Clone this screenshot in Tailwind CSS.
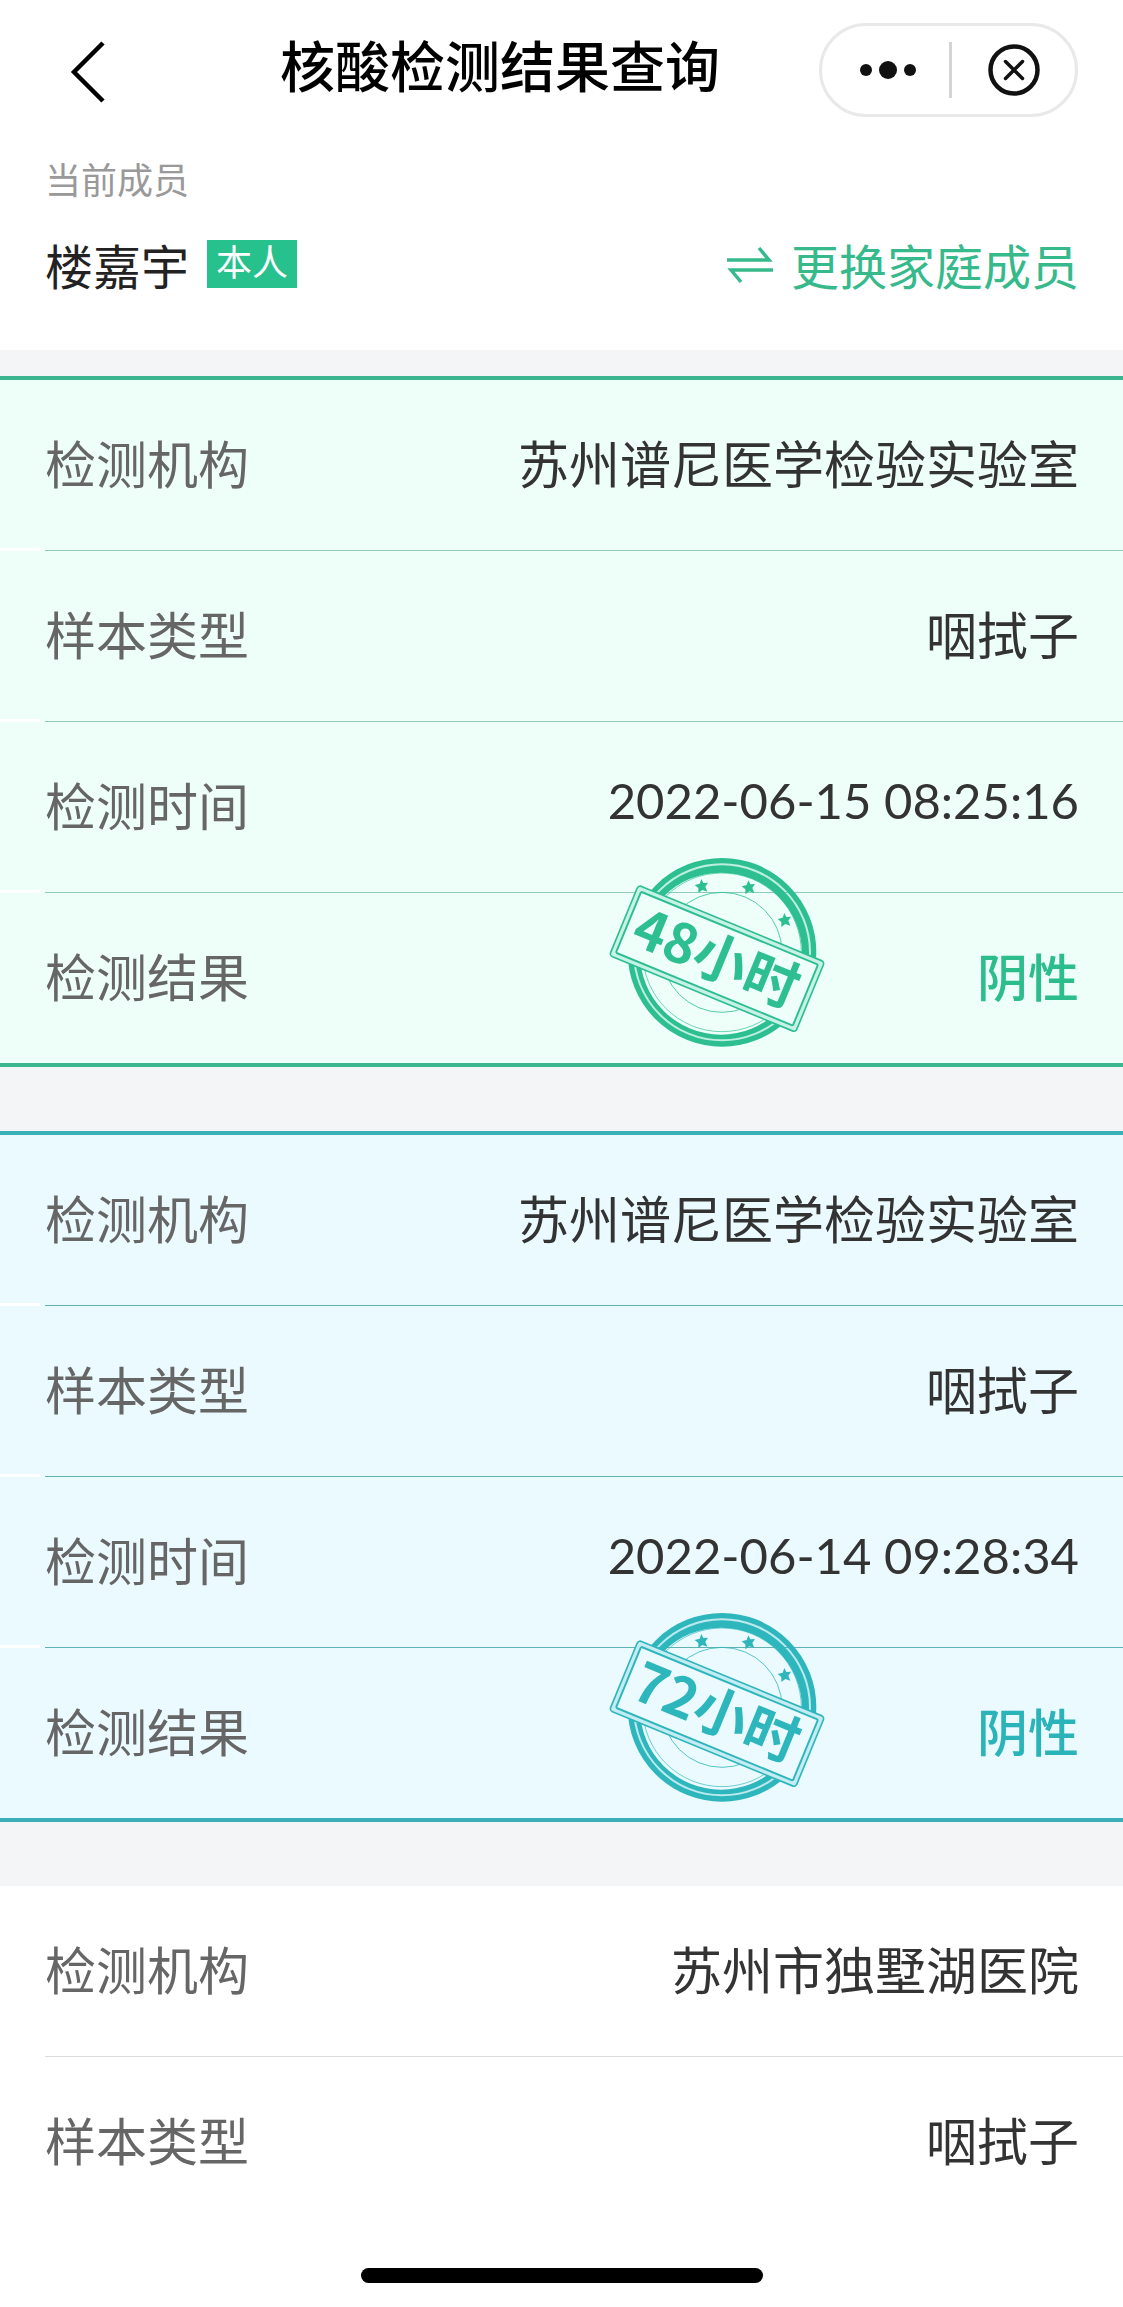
<!DOCTYPE html>
<html lang="zh-CN">
<head>
<meta charset="utf-8">
<meta name="viewport" content="width=device-width, initial-scale=1">
<title>核酸检测结果查询</title>
<script src="https://cdn.jsdelivr.net/npm/@tailwindcss/browser@4"></script>
</head>
<body class="bg-white font-['Noto_Sans_CJK_SC',sans-serif] text-[#333]">

<svg class="hidden" aria-hidden="true">
  <symbol id="stamp" viewBox="0 0 750 690">
    <g fill="none" stroke="currentColor">
      <circle cx="396" cy="337" r="275" stroke-width="16"/>
      <circle cx="396" cy="337" r="264" stroke-width="8" stroke-opacity="0.25"/>
      <circle cx="396" cy="337" r="238" stroke-width="2"/>
      <circle cx="396" cy="337" r="180" stroke-width="3" stroke-opacity="0.8"/>
    </g>
    <path fill="currentColor" fill-rule="evenodd" d="M396 76a261 261 0 1 0 0 522a261 261 0 1 0 0-522zM393 98a242 242 0 1 1 0 486a242 242 0 1 1 0-486z"/>
    <g fill="currentColor">
      <path id="star" d="M334 117l6 12 14-1-8 12 6 15-15-5-12 9 0-15-11-9 15-4z"/>
      <use href="#star" x="141" y="4"/>
      <use href="#star" x="249" y="102"/>
    </g>
    <g transform="rotate(22.4 381 356)">
      <rect x="79" y="242" width="604" height="228" rx="10" class="fill-(--card)" stroke="currentColor" stroke-width="5"/>
      <rect x="86" y="249" width="590" height="214" rx="6" fill="none" stroke="currentColor" stroke-opacity="0.2" stroke-width="10"/>
      <rect x="94" y="257" width="574" height="198" rx="4" fill="none" stroke="currentColor" stroke-width="6"/>
    </g>
  </symbol>
</svg>

<header class="flex items-start justify-between pt-[23px] pr-[45px] pl-[68px]">
  <button type="button" aria-label="返回" class="w-[212px] pt-[18px]">
    <svg class="h-[62px] w-[40px]" viewBox="0 0 40 62" fill="none" stroke="#000" stroke-width="4.500"><path d="M35 2L6 31l29 29"/></svg>
  </button>
  <h1 class="flex-1 text-[55px] leading-[80px] font-medium text-black">核酸检测结果查询</h1>
  <div class="flex h-[94px] w-[259px] items-center rounded-full border-3 border-[#e9e9e9] pl-1">
    <button type="button" aria-label="更多" class="flex flex-1 items-center justify-center gap-[7px]">
      <span class="size-3 rounded-full bg-[#111]"></span>
      <span class="size-[18px] rounded-full bg-[#111]"></span>
      <span class="size-3 rounded-full bg-[#111]"></span>
    </button>
    <span class="h-14 w-[3px] bg-[#d4d4d4]"></span>
    <button type="button" aria-label="关闭" class="flex flex-1 items-center justify-center">
      <svg class="size-[52px]" viewBox="0 0 52 52" fill="none" stroke="#111" stroke-linecap="round"><circle cx="26" cy="26" r="23.5" stroke-width="4.500"/><path d="M17.500 17.500l17 17m0-17l-17 17" stroke-width="3.500"/></svg>
    </button>
  </div>
</header>

<main>
  <section class="pt-[35px] pr-[44px] pb-[52px] pl-[45px]">
    <p class="text-[36px] leading-[52px] text-[#999]">当前成员</p>
    <div class="mt-[26px] flex items-center justify-between">
      <div class="flex items-center gap-[18px] text-[48px] leading-[68px] text-[#222]">
        <span>楼嘉宇</span>
        <span class="h-12 bg-[#27c18d] px-[9px] text-[36px] leading-[40px] text-white">本人</span>
      </div>
      <button type="button" class="flex items-center gap-[18px] text-[48px] leading-[68px] text-[#36ba8b]">
        <svg class="h-[40px] w-[46px]" viewBox="0 0 46 40" fill="none" stroke="currentColor" stroke-width="3.500"><path d="M0 16h42L32 4M46 26H4l10 12"/></svg>
        更换家庭成员
      </button>
    </div>
  </section>

  <div class="flex flex-col gap-16 bg-[#f4f5f7] pt-[26px]">

    <dl class="border-y-4 border-[#3cb68e] bg-[#eefffa] text-[51px] leading-[74px] [--card:#eefffa]">
      <div class="relative pl-[45px] after:absolute after:bottom-0 after:left-0 after:h-[3px] after:w-10 after:bg-white">
        <div class="flex justify-between border-b border-[#8fcdb9] pt-[45px] pr-[44px] pb-[51px]"><dt class="text-[#666]">检测机构</dt><dd>苏州谱尼医学检验实验室</dd></div>
      </div>
      <div class="relative pl-[45px] after:absolute after:bottom-0 after:left-0 after:h-[3px] after:w-10 after:bg-white">
        <div class="flex justify-between border-b border-[#8fcdb9] pt-[45px] pr-[44px] pb-[51px]"><dt class="text-[#666]">样本类型</dt><dd>咽拭子</dd></div>
      </div>
      <div class="relative pl-[45px] after:absolute after:bottom-0 after:left-0 after:h-[3px] after:w-10 after:bg-white">
        <div class="flex justify-between border-b border-[#8fcdb9] pt-[45px] pr-[44px] pb-[51px]"><dt class="text-[#666]">检测时间</dt><dd class="font-[Lato,sans-serif] text-[49px] leading-[66px]">2022-06-15 08:25:16</dd></div>
      </div>
      <div class="relative flex justify-between pt-[45px] pr-[44px] pb-[51px] pl-[45px]">
        <dt class="text-[#666]">检测结果</dt><dd class="font-medium text-[#2dbd8c]">阴性</dd>
        <dd class="absolute -top-[53px] right-[283px] text-[#2dbf8f]">
          <svg class="h-[230px] w-[250px]" viewBox="0 0 750 690" role="img" aria-label="48小时"><use href="#stamp"/><text x="379" y="414" text-anchor="middle" transform="rotate(22.4 381 356)" fill="currentColor" class="text-[164px] font-bold">48小时</text></svg>
        </dd>
      </div>
    </dl>

    <dl class="border-y-4 border-[#3bb0b8] bg-[#ebfaff] text-[51px] leading-[74px] [--card:#ebfaff]">
      <div class="relative pl-[45px] after:absolute after:bottom-0 after:left-0 after:h-[3px] after:w-10 after:bg-white">
        <div class="flex justify-between border-b border-[#5fb3b8] pt-[45px] pr-[44px] pb-[51px]"><dt class="text-[#666]">检测机构</dt><dd>苏州谱尼医学检验实验室</dd></div>
      </div>
      <div class="relative pl-[45px] after:absolute after:bottom-0 after:left-0 after:h-[3px] after:w-10 after:bg-white">
        <div class="flex justify-between border-b border-[#5fb3b8] pt-[45px] pr-[44px] pb-[51px]"><dt class="text-[#666]">样本类型</dt><dd>咽拭子</dd></div>
      </div>
      <div class="relative pl-[45px] after:absolute after:bottom-0 after:left-0 after:h-[3px] after:w-10 after:bg-white">
        <div class="flex justify-between border-b border-[#5fb3b8] pt-[45px] pr-[44px] pb-[51px]"><dt class="text-[#666]">检测时间</dt><dd class="font-[Lato,sans-serif] text-[49px] leading-[66px]">2022-06-14 09:28:34</dd></div>
      </div>
      <div class="relative flex justify-between pt-[45px] pr-[44px] pb-[51px] pl-[45px]">
        <dt class="text-[#666]">检测结果</dt><dd class="font-medium text-[#2ab3b9]">阴性</dd>
        <dd class="absolute -top-[53px] right-[283px] text-[#2eb6bd]">
          <svg class="h-[230px] w-[250px]" viewBox="0 0 750 690" role="img" aria-label="72小时"><use href="#stamp"/><text x="379" y="411" text-anchor="middle" transform="rotate(22.4 381 356)" fill="currentColor" class="text-[164px] font-bold">72小时</text></svg>
        </dd>
      </div>
    </dl>

    <dl class="bg-white text-[51px] leading-[74px]">
      <div class="pl-[45px]">
        <div class="flex justify-between border-b border-[#dcdcdc] pt-[45px] pr-[44px] pb-[51px]"><dt class="text-[#666]">检测机构</dt><dd>苏州市独墅湖医院</dd></div>
      </div>
      <div class="flex justify-between pt-[45px] pr-[44px] pb-[51px] pl-[45px]"><dt class="text-[#666]">样本类型</dt><dd>咽拭子</dd></div>
    </dl>
  </div>
</main>

<footer class="pt-[41px] pb-[23px]">
  <div class="mx-auto h-[15px] w-[402px] rounded-full bg-black"></div>
</footer>
</body>
</html>
